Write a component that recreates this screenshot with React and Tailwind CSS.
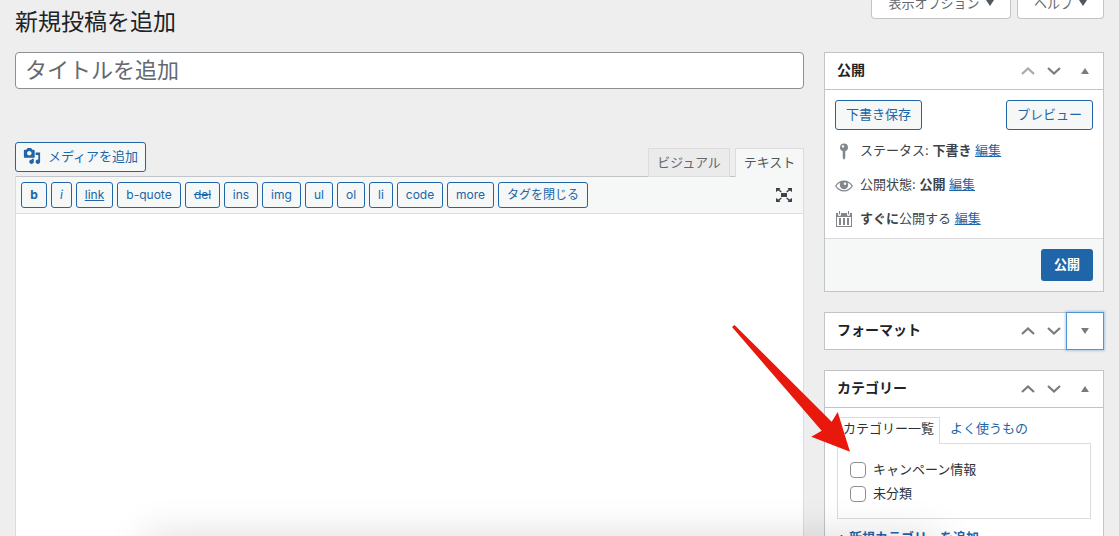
const JP = "font-['Inter','Noto_Sans_CJK_JP',sans-serif]";

function MediaIcon() {
  return (
    <svg viewBox="0 0 20 20" className="size-[18px] fill-[#2065a8]" aria-hidden="true">
      <path d="M13 11V4c0-.55-.45-1-1-1h-1.67L9 1H5L3.67 3H2c-.55 0-1 .45-1 1v7c0 .55.45 1 1 1h10c.55 0 1-.45 1-1zM7 4.5c1.38 0 2.5 1.12 2.5 2.5S8.38 9.5 7 9.5 4.5 8.38 4.5 7 5.62 4.5 7 4.5zM14 6h5v10.5c0 1.38-1.12 2.5-2.5 2.5S14 17.88 14 16.5s1.12-2.5 2.5-2.5c.17 0 .34.02.5.05V9h-3V6zm-4 8.05V13h2v3.5c0 1.38-1.12 2.5-2.5 2.5S7 17.88 7 16.5 8.12 14 9.5 14c.17 0 .34.02.5.05z" />
    </svg>
  );
}

function PinIcon() {
  return (
    <svg viewBox="0 0 20 20" className="size-5 fill-[#82878c]" aria-hidden="true">
      <path fillRule="evenodd" d="M10 2.500a3.900 3.900 0 0 1 1.300 7.600V16.500L10.400 18.500h-.8L8.700 16.500v-6.400A3.900 3.900 0 0 1 10 2.500zM9 4.200a1.200 1.200 0 1 0 0 2.400 1.200 1.200 0 0 0 0-2.400z" />
    </svg>
  );
}

function EyeIcon() {
  return (
    <svg viewBox="0 0 20 20" className="size-5 fill-[#82878c]" aria-hidden="true">
      <path fillRule="evenodd" d="M10 5.500c3.800 0 7 2 9 5.500-2 3.500-5.200 5.500-9 5.500S3 14.500 1 11c2-3.500 5.200-5.500 9-5.500zM6.500 7.700C4.700 8.400 3.300 9.500 2.400 11c1.700 2.700 4.500 4.200 7.600 4.200s5.900-1.500 7.600-4.200c-.9-1.500-2.300-2.600-4.100-3.300.4.700.7 1.500.7 2.400a4.200 4.200 0 0 1-8.400 0c0-.9.300-1.700.7-2.400zM11 7.500a1.300 1.300 0 1 0 0 2.600 1.300 1.300 0 0 0 0-2.600z" />
    </svg>
  );
}

function CalendarIcon() {
  return (
    <svg viewBox="0 0 20 20" className="size-5 fill-[#82878c]" aria-hidden="true">
      <path fillRule="evenodd" d="M2 4h2v1.500a1.500 1.500 0 0 0 3 0V4h6v1.500a1.500 1.500 0 0 0 3 0V4h2v14H2zM3 8v9h14V8z" />
      <path d="M5 2h1v3.500H5zM14 2h1v3.500h-1zM5 9h2v7H5zM9 9h2v7H9zM13 9h2v7h-2z" />
    </svg>
  );
}

function ExpandIcon() {
  return (
    <svg viewBox="0 0 20 20" className="size-5 fill-[#3c434a]" aria-hidden="true">
      <path d="M7 8h6v4H7zM2 3h4.500L5.400 4.300 7.800 6.700 7 7.600 4.300 5.400 2 7zM18 3h-4.500l1.100 1.300-2.400 2.400.8.9 2.700-2.200L18 7zM2 17h4.500l-1.100-1.300 2.400-2.400-.8-.9-2.700 2.200L2 13zM18 17h-4.500l1.100-1.300-2.400-2.400.8-.9 2.700 2.200L18 13z" />
    </svg>
  );
}

function Chevron({ down, muted }) {
  return (
    <button type="button" aria-label={down ? "下に移動" : "上に移動"} className="flex h-9 w-[26px] items-center justify-center">
      <svg viewBox="0 0 14 8" className={muted ? "h-2 w-3.5 stroke-[#a7aaad]" : "h-2 w-3.5 stroke-[#787c82]"} fill="none" strokeWidth="2.200">
        <path d={down ? "M1 1l6 5.500L13 1" : "M1 7l6-5.500L13 7"} />
      </svg>
    </button>
  );
}

function PanelHeader({ title, muted, closed }) {
  return (
    <div className="flex h-9 items-center">
      <h2 className="flex-1 pb-0.5 pl-3 text-[14px] font-bold text-[#1d2327]">{title}</h2>
      <Chevron muted={muted} />
      <Chevron down />
      <button
        type="button"
        aria-label={title + "パネルを切り替え"}
        className={
          closed
            ? "-my-px -mr-px -ml-px flex h-[38px] w-[38px] items-center justify-center border border-[#4f94d4] shadow-[0_0_2px_1px_rgba(79,148,212,0.4)]"
            : "flex h-9 w-9 items-center justify-center"
        }
      >
        <svg viewBox="0 0 8 6" className="h-1.5 w-2 fill-[#787c82]">
          <path d={closed ? "M0 0h8L4 6z" : "M0 6h8L4 0z"} />
        </svg>
      </button>
    </div>
  );
}

const quickTags = [
  { label: "b", className: "w-[26px] font-bold" },
  { label: "i", className: "w-[21px] italic" },
  { label: "link", className: "w-[37px] underline" },
  { label: "b-quote", className: "w-16" },
  { label: "del", className: "w-[35px] line-through" },
  { label: "ins", className: "w-[34px]" },
  { label: "img", className: "w-[39px]" },
  { label: "ul", className: "w-7" },
  { label: "ol", className: "w-7" },
  { label: "li", className: "w-6" },
  { label: "code", className: "w-[46px]" },
  { label: "more", className: "w-[47px]" },
  { label: "タグを閉じる", className: "w-[90px]" },
];

function OutlineButton({ children, className }) {
  return (
    <button type="button" className={"flex h-[30px] items-center justify-center rounded-[3px] border border-[#2065a8] bg-[#f6f7f7] pb-0.5 text-[13px] whitespace-nowrap text-[#2065a8] " + className}>
      {children}
    </button>
  );
}

function StatusRow({ icon, children }) {
  return (
    <div className="-ml-px flex h-[34px] items-center gap-1.5 whitespace-nowrap">
      {icon}
      <p className="pb-0.5">{children}</p>
    </div>
  );
}

function EditLink() {
  return <a href="#edit" className="text-[#2065a8] underline">編集</a>;
}

function ScreenTab({ children, className }) {
  return (
    <button type="button" className={"flex h-8 items-center justify-center gap-1.5 rounded-b border border-t-0 border-[#c3c4c7] bg-white text-[13px] whitespace-nowrap text-[#646970] " + className}>
      {children}
      <svg viewBox="0 0 8 6" className="h-1.5 w-2 fill-[#50575e]" aria-hidden="true">
        <path d="M0 0h8L4 6z" />
      </svg>
    </button>
  );
}

export default function App() {
  return (
    <div className={"relative h-screen overflow-hidden bg-[#eeeeee] px-[15px] text-[13px] leading-5 text-[#3c434a] " + JP}>
      <header className="flex h-[52px] items-start justify-between">
        <h1 className="pt-2 text-[23px] leading-7 text-[#1d2327]">新規投稿を追加</h1>
        <div className="-mt-[13px] flex gap-1.5">
          <ScreenTab className="w-[140px]">表示オプション</ScreenTab>
          <ScreenTab className="w-[87px]">ヘルプ</ScreenTab>
        </div>
      </header>

      <div className="flex items-start gap-5">
        <main className="min-w-0 flex-1">
          <input
            type="text"
            aria-label="タイトルを追加"
            placeholder="タイトルを追加"
            className="block h-[37px] w-full rounded border border-[#8c8f94] bg-white px-[9px] pb-0.5 text-[22px] placeholder:text-[#646970]"
          />
          <div className="mt-[53px] flex h-[35px] items-start justify-between">
            <OutlineButton className="w-[131px] gap-[7px]">
              <MediaIcon />
              メディアを追加
            </OutlineButton>
            <div className="mt-1.5 flex gap-[5px]">
              <button type="button" className="h-[29px] w-[82px] border border-[#dcdcde] bg-[#ebebeb] pb-0.5 text-[13px] text-[#646970]">ビジュアル</button>
              <button type="button" className="relative z-10 h-[29px] w-[69px] border border-b-0 border-[#dcdcde] bg-[#f6f7f7] pb-0.5 text-[13px] text-[#50575e]">テキスト</button>
            </div>
          </div>
          <div className="-mt-px border border-[#dcdcde] border-t-[#c3c4c7] bg-white">
            <div className="flex h-[37px] items-center justify-between border-b border-[#dcdcde] bg-[#f6f7f7] pr-[9px] pl-[5px]">
              <div className="flex gap-1">
                {quickTags.map((tag) => (
                  <button
                    key={tag.label}
                    type="button"
                    className={"h-[26px] rounded-[3px] border border-[#2065a8] bg-[#f6f7f7] text-[12px] whitespace-nowrap text-[#2065a8] " + tag.className}
                  >
                    {tag.label}
                  </button>
                ))}
              </div>
              <button type="button" aria-label="集中執筆モード">
                <ExpandIcon />
              </button>
            </div>
            <textarea aria-label="本文" className="block h-96 w-full resize-none bg-white p-2.5 outline-none" />
          </div>
        </main>

        <aside className="flex w-[280px] shrink-0 flex-col gap-5">
          <section className="border border-[#c3c4c7] bg-white">
            <div className="border-b border-[#c3c4c7]">
              <PanelHeader title="公開" muted />
            </div>
            <div className="px-2.5 pt-2.5">
              <div className="flex justify-between">
                <OutlineButton className="w-[87px]">下書き保存</OutlineButton>
                <OutlineButton className="w-[87px]">プレビュー</OutlineButton>
              </div>
              <div className="mt-1 pb-0.5">
                <StatusRow icon={<PinIcon />}>ステータス: <b>下書き</b> <EditLink /></StatusRow>
                <StatusRow icon={<EyeIcon />}>公開状態: <b>公開</b> <EditLink /></StatusRow>
                <StatusRow icon={<CalendarIcon />}><b>すぐに</b>公開する <EditLink /></StatusRow>
              </div>
            </div>
            <div className="flex justify-end border-t border-[#dcdcde] bg-[#f6f7f7] p-2.5">
              <button type="button" className="h-8 w-[52px] rounded-[3px] bg-[#2065a8] pb-0.5 text-[13px] font-bold text-white">公開</button>
            </div>
          </section>

          <section className="border border-[#c3c4c7] bg-white">
            <PanelHeader title="フォーマット" closed />
          </section>

          <section className="border border-[#c3c4c7] bg-white">
            <div className="border-b border-[#c3c4c7]">
              <PanelHeader title="カテゴリー" />
            </div>
            <div className="px-3 pt-[9px]">
              <div className="flex">
                <a href="#all" className="relative z-10 -mb-px h-[27px] w-[103px] border border-b-0 border-[#dcdcde] bg-white pl-[5px] leading-5 whitespace-nowrap text-[#2c3338]">カテゴリー一覧</a>
                <a href="#popular" className="pl-2.5 leading-[22px] text-[#2065a8]">よく使うもの</a>
              </div>
              <div className="flex flex-col gap-1 border border-[#dcdcde] px-3 pt-4 pb-3.5">
                {["キャンペーン情報", "未分類"].map((name) => (
                  <label key={name} className="flex h-5 items-center gap-[7px] text-[#2c3338]">
                    <input type="checkbox" className="size-4 appearance-none rounded border border-[#8c8f94] bg-white" />
                    <span className="pb-0.5">{name}</span>
                  </label>
                ))}
              </div>
              <a href="#add-category" className="mt-2 block font-bold whitespace-nowrap text-[#2065a8]">+ 新規カテゴリーを追加</a>
            </div>
          </section>
        </aside>
      </div>

      <div className="pointer-events-none absolute top-full right-[180px] left-[145px] h-10 shadow-[0_0_40px_rgba(0,0,0,0.14)]" />

      <svg viewBox="0 0 120 130" className="pointer-events-none absolute top-[324px] right-[267px] z-20 h-[130px] w-[120px] fill-[#e8180c]" aria-hidden="true">
        <path d="M0 3L2.500 1L99.700 97.700L105.700 88L118 127.700L79.300 112.700L89.700 106.700z" />
      </svg>
    </div>
  );
}
